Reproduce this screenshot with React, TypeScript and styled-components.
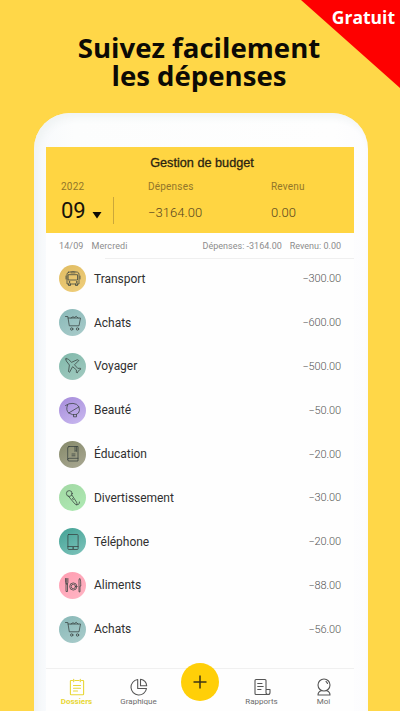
import React from 'react';
import styled, { createGlobalStyle } from 'styled-components';

const GlobalStyle = createGlobalStyle`
  * { box-sizing: border-box; }
  body { margin: 0; overflow: hidden; background: #ffd748; }
`;

const Page = styled.main`
  position: relative;
  width: 400px;
  height: 711px;
  overflow: hidden;
  background: #ffd748;
  font-family: Roboto, "Liberation Sans", sans-serif;
  display: flex;
  flex-direction: column;
  align-items: center;
`;

const Ribbon = styled.div`
  position: absolute;
  top: 0;
  right: 0;
  width: 99px;
  height: 88px;
  background: #fe0000;
  clip-path: polygon(0 0, 100% 0, 100% 100%);
  color: #fff;
  font: 700 17.5px/24px "Open Sans", "Noto Sans", sans-serif;
  text-align: right;
  padding: 5px 5px 0 0;
`;

const Headline = styled.h1`
  margin: 0;
  flex: none;
  height: 113px;
  padding: 33px 2px 0 0;
  text-align: center;
  white-space: nowrap;
  color: #0c0a05;
  font: 700 27.6px/28px "Open Sans", "Noto Sans", sans-serif;
`;

const Phone = styled.section`
  flex: none;
  width: 334px;
  height: 640px;
  margin-left: 2px;
  padding: 34px 14px 0 12px;
  border-radius: 36px 36px 0 0;
  background: linear-gradient(90deg, #f7f9fc 0, #fcfdfd 40px, #fefefe 300px, #fcfcfe 100%);
  box-shadow: inset 4px 4px 8px #eff3f3;
`;

const Screen = styled.div`
  width: 308px;
  height: 564px;
  display: flex;
  flex-direction: column;
  background: #fefefe;
`;

const Header = styled.header`
  height: 86px;
  flex: none;
  background: #ffd542;
`;

const AppTitle = styled.h2`
  margin: 0;
  padding: 7px 0 0 4px;
  text-align: center;
  color: #2b2410;
  font: 400 12.7px/18px "Liberation Sans", Arial, sans-serif;
  -webkit-text-stroke: 0.3px #2b2410;
`;

const Summary = styled.div`
  display: grid;
  grid-template-columns: 87px 123px 1fr;
  padding: 8px 0 0 15px;
`;

const Caption = styled.div`
  height: 14px;
  font-size: 10px;
  line-height: 14px;
  letter-spacing: 0.2px;
  color: #927629;
`;

const Total = styled.div`
  margin-top: 10px;
  font-size: 13px;
  font-weight: 300;
  line-height: 18px;
  letter-spacing: 0.05px;
  color: #584620;
`;

const Month = styled.div`
  display: flex;
  align-items: center;
  width: 53px;
  height: 27px;
  margin-top: 3px;
  border-right: 1px solid #cba73a;
  font-size: 22px;
  line-height: 27px;
  color: #17130a;
`;

const Caret = styled.svg`
  width: 10px;
  height: 8px;
  margin: 8px 0 0 6px;
`;

const DayBar = styled.div`
  display: flex;
  align-items: center;
  flex: none;
  height: 26px;
  padding: 0 13px;
  font-size: 9px;
  color: #8c8c8c;
  white-space: pre;
  background: linear-gradient(#efefef, #efefef) 59px 100% / 249px 1px no-repeat;
`;

const DayText = styled.span<{ $gap?: string; $spacing?: string }>`
  margin-left: ${p => p.$gap ?? '0'};
  letter-spacing: ${p => p.$spacing ?? '0'};
`;

const List = styled.ul`
  margin: -2px 0 2px;
  padding: 0;
  height: 409px;
  flex: none;
  list-style: none;
`;

const Row = styled.li`
  display: flex;
  align-items: center;
  height: 43.8px;
  padding: 0 13px;
`;

const Badge = styled.span<{ $from: string; $to: string }>`
  display: flex;
  align-items: center;
  justify-content: center;
  width: 27px;
  height: 27px;
  margin-right: 8px;
  border-radius: 50%;
  background: linear-gradient(150deg, ${p => p.$from}, ${p => p.$to});
`;

const Name = styled.span`
  flex: 1;
  font-size: 12px;
  letter-spacing: -0.03px;
  color: #303030;
`;

const Amount = styled.span`
  font-size: 11px;
  font-weight: 300;
  letter-spacing: -0.12px;
  color: #555;
`;

const Glyph = styled.svg`
  width: 20px;
  height: 20px;
  fill: none;
  stroke: #37403f;
  stroke-width: 0.75;
  stroke-linecap: round;
  stroke-linejoin: round;
`;

const Nav = styled.nav`
  display: grid;
  grid-template-columns: 61px 63px 60px 63px 61px;
  flex: none;
  height: 43px;
  border-top: 1px solid #f0f0f0;
  background: #fefefe;
`;

const Tab = styled.div<{ $active?: boolean }>`
  display: flex;
  flex-direction: column;
  align-items: center;
  padding-top: 8px;
  font-size: 8px;
  line-height: 10px;
  font-weight: ${p => (p.$active ? 700 : 400)};
  color: ${p => (p.$active ? '#e8d737' : '#6b6b6b')};
  & > svg {
    width: 20px;
    height: 20px;
    flex: none;
    stroke: ${p => (p.$active ? '#e8d737' : '#555')};
    stroke-width: 1.1;
  }
`;

const AddButton = styled.button`
  width: 38px;
  height: 38px;
  margin: -6px auto 0;
  padding: 0;
  border: 0;
  border-radius: 50%;
  background: #ffcf08;
  display: flex;
  align-items: center;
  justify-content: center;
`;

const cart = (
  <>
    <path d="M2.500 3.500h2.300l1.500 9.300h9.700L17.500 5H5.200M8 5l2-1.300 1.300.8 2-1.200L15 5" />
    <circle cx="8.700" cy="16" r="1.200" />
    <circle cx="14.500" cy="16" r="1.200" />
  </>
);

const icons: Record<string, React.ReactNode> = {
  bus: (
    <>
      <path d="M5.500 3.200q4.500-1.500 9 0 1.500.5 1.500 2V15H4V5.200q0-1.500 1.500-2ZM5.500 5.700h9V11h-9ZM8 3.900h4M3 7v3M17 7v3M5.500 15v1.500h2V15M12.500 15v1.500h2V15" />
      <circle cx="6.300" cy="13" r=".4" />
      <circle cx="13.700" cy="13" r=".4" />
    </>
  ),
  cart,
  plane: (
    <path d="M3 2.800q1.500-.3 2.600.7l3 2.800 5.700-2.600 1.500.8-4.300 4.300 3.300 3.600 2.500-.2.700.8-2.300 1.500-1.500 2.500-.9-.6.100-2.500-3.800-3.200-3.100 5.600-1-.8.900-6.500L3.300 5Q2.500 3.800 3 2.800Z" />
  ),
  beauty: (
    <path d="M2.500 5.500Q6 3 10 3.400q4 .2 6 3.400L5.700 13Q2.500 10 4.500 5.200M16 6.800q1.200 4-.5 6.200L13 14.600H9.500L5.700 13M10.500 14.600v2.200h3v-2.200" />
  ),
  book: (
    <path d="M6 2.500h9V17H6q-1.300 0-1.300-1.300V4Q4.700 2.500 6 2.500ZM4.700 15.500q0-1.200 1.300-1.200h9M12 2.500v5l.8-.8.8.8v-5M9 10h3M9 11.800h3" />
  ),
  microphone: (
    <>
      <circle cx="6.300" cy="5.500" r="2.900" />
      <path d="m5.500 8.300 6.300 7.500q1.500 1.500 3.200.8 1.800-.6 1.500-2.600M8.800 6.900l4.700 7.200q1 1.300.2 2.700M9.500 10.500l.8 1.200" />
    </>
  ),
  tablet: (
    <>
      <path d="M5.700 2.500h8.600q.8 0 .8.800v13.400q0 .8-.8.800H5.700q-.8 0-.8-.8V3.300q0-.8.8-.8ZM4.900 14.500h10.200" />
      <circle cx="10" cy="16" r=".4" />
    </>
  ),
  food: (
    <>
      <circle cx="10.300" cy="11.500" r="3.600" />
      <circle cx="10.300" cy="11.500" r="2.200" />
      <path d="M2.500 3.500v4q0 1.500 1.200 1.500t1.200-1.500v-4M3.700 3.500V9M3 9v7.500h1.500V9M16 16.500V5q0-1.500 1-1.500.8 1.500.8 7.500H17v5.500Z" />
    </>
  ),
};

const rows = [
  { name: 'Transport', amount: '−300.00', icon: 'bus', from: '#e0bc62', to: '#f0cf7c' },
  { name: 'Achats', amount: '−600.00', icon: 'cart', from: '#88b8b7', to: '#aacccb' },
  { name: 'Voyager', amount: '−500.00', icon: 'plane', from: '#80b8aa', to: '#a3cbc1' },
  { name: 'Beauté', amount: '−50.00', icon: 'beauty', from: '#a58bda', to: '#cabaf0' },
  { name: 'Éducation', amount: '−20.00', icon: 'book', from: '#858969', to: '#aaa994' },
  { name: 'Divertissement', amount: '−30.00', icon: 'microphone', from: '#a2d8a4', to: '#aeeab3' },
  { name: 'Téléphone', amount: '−20.00', icon: 'tablet', from: '#42a194', to: '#7fc4bc' },
  { name: 'Aliments', amount: '−88.00', icon: 'food', from: '#ff9db1', to: '#ffb5c4' },
  { name: 'Achats', amount: '−56.00', icon: 'cart', from: '#88b8b7', to: '#aacccb' },
];

export default function App() {
  return (
    <Page>
      <GlobalStyle />
      <Headline>Suivez facilement<br />les dépenses</Headline>
      <Ribbon>Gratuit</Ribbon>
      <Phone>
        <Screen>
          <Header>
            <AppTitle>Gestion de budget</AppTitle>
            <Summary>
              <div>
                <Caption>2022</Caption>
                <Month>
                  09
                  <Caret viewBox="0 0 10 8"><path d="M.5 1h9L5 7.500Z" fill="#0d0b05" /></Caret>
                </Month>
              </div>
              <div>
                <Caption>Dépenses</Caption>
                <Total>−3164.00</Total>
              </div>
              <div>
                <Caption>Revenu</Caption>
                <Total>0.00</Total>
              </div>
            </Summary>
          </Header>
          <DayBar>
            <DayText $spacing="0.1px">14/09</DayText>
            <DayText $gap="8px" $spacing="0.1px">Mercredi</DayText>
            <DayText $gap="auto">Dépenses: -3164.00</DayText>
            <DayText $gap="8px">Revenu: 0.00</DayText>
          </DayBar>
          <List>
            {rows.map((row, i) => (
              <Row key={i}>
                <Badge $from={row.from} $to={row.to}>
                  <Glyph viewBox="0 0 20 20">{icons[row.icon]}</Glyph>
                </Badge>
                <Name>{row.name}</Name>
                <Amount>{row.amount}</Amount>
              </Row>
            ))}
          </List>
          <Nav>
            <Tab $active>
              <Glyph viewBox="0 0 20 20">
                <path d="M5.500 3.500H4q-.6 0-.6.600V17q0 .7.700.7h11.800q.7 0 .7-.7V4.100q0-.6-.6-.6h-1.500M8 3.500h4M6.700 2.300v2.400M13.300 2.300v2.400M6.500 8.500h7M6.500 11.300h7M6.500 14h4" />
              </Glyph>
              Dossiers
            </Tab>
            <Tab>
              <Glyph viewBox="0 0 20 20">
                <path d="M8.700 2.500A7.800 7.800 0 1 0 17.500 11.500H8.700ZM11.500 2.300V8.700h6.200Q17.200 3.300 11.500 2.300Z" />
              </Glyph>
              Graphique
            </Tab>
            <AddButton aria-label="+">
              <svg width="14" height="14" viewBox="0 0 14 14"><path d="M7 .5v13M.5 7h13" stroke="#3d3515" strokeWidth="1.500" /></svg>
            </AddButton>
            <Tab>
              <Glyph viewBox="0 0 20 20">
                <path d="M14 12V3.500q0-1-1-1H4q-1 0-1 1V16.500q0 1 1 1h11.500M5.700 6.500H10M5.700 9.500h5.500M5.700 12.500H9M14 12.500h4v3q0 2-2 2t-2-2Z" />
              </Glyph>
              Rapports
            </Tab>
            <Tab>
              <Glyph viewBox="0 0 20 20">
                <circle cx="10" cy="8" r="6" />
                <path d="M7.500 13.500Q4 14.800 4 18h12q0-3.200-3.500-4.500M13.500 6.500q-.5-1.300-1.500-2" />
              </Glyph>
              Moi
            </Tab>
          </Nav>
        </Screen>
      </Phone>
    </Page>
  );
}
